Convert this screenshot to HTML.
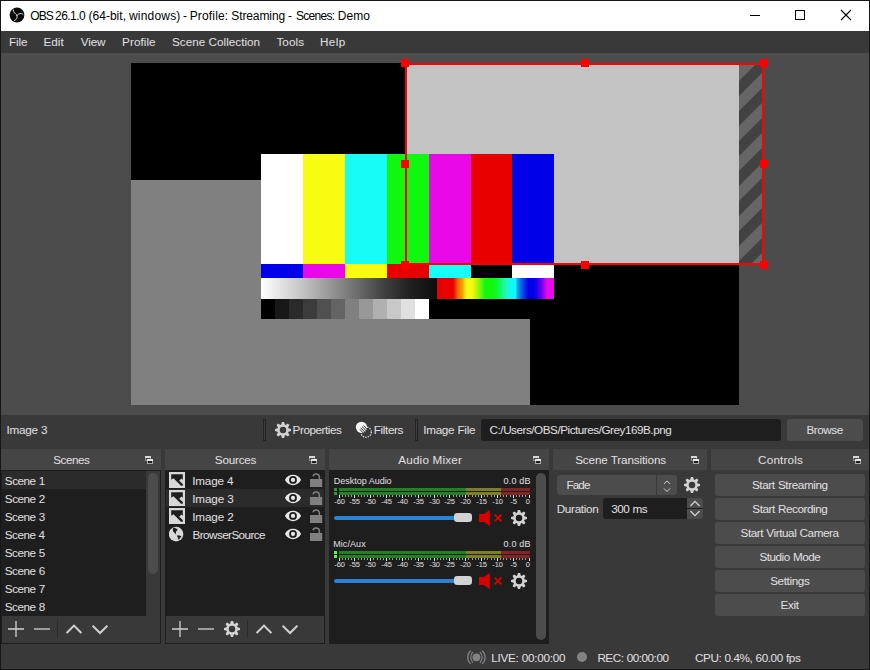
<!DOCTYPE html><html><head><meta charset="utf-8"><title>OBS</title><style>
html,body{margin:0;padding:0}
body{width:870px;height:670px;position:relative;overflow:hidden;background:#3a393a;font-family:"Liberation Sans",sans-serif;font-size:12px;color:#e1e0e1}
.a{position:absolute;display:block}
.t{position:absolute;white-space:nowrap;line-height:14px;font-size:12px}
.tk{position:absolute;white-space:nowrap;line-height:7px;font-size:7.5px;letter-spacing:-0.15px;color:#e1e0e1}
.btn{position:absolute;background:#4c4c4c;border-radius:3px}

</style></head><body>
<div class="a" style="left:0px;top:0px;width:870px;height:670px;background:#161616;"></div>
<div class="a" style="left:1px;top:1px;width:868px;height:30px;background:#ffffff;"></div>
<div class="a" style="left:1px;top:31px;width:868px;height:22px;background:#3a393a;"></div>
<div class="a" style="left:1px;top:53px;width:868px;height:362px;background:#4c4c4c;"></div>
<div class="a" style="left:1px;top:415px;width:868px;height:254px;background:#3a393a;"></div>
<svg class="a" style="left:9px;top:7px" width="16" height="16" viewBox="0 0 16 16"><circle cx="8" cy="8" r="7.4" fill="#0a0a0a"/><path d="M8 8.3 C6.2 6.6 4.4 5.6 4.3 2.9 M8 8.3 C9.6 6.4 12.4 5.6 14 7.4 M8 8.3 C8.6 10.6 7.4 12.8 5.4 13.6" stroke="#e6e6e6" stroke-width="0.9" fill="none" stroke-linecap="round"/></svg>
<svg class="a" style="left:740px;top:1px" width="129" height="30" viewBox="740 1 129 30" shape-rendering="crispEdges"><rect x="750" y="15" width="10" height="1" fill="#000"/><rect x="795.5" y="10.5" width="9" height="9" fill="none" stroke="#000"/><path d="M841 10 L851 20 M851 10 L841 20" stroke="#000" stroke-width="1.1" shape-rendering="geometricPrecision"/></svg>
<svg class="a" style="left:0;top:53px" width="870" height="362" viewBox="0 53 870 362">
<defs><pattern id="hatch" patternUnits="userSpaceOnUse" width="30" height="30" x="739" y="51"><rect width="30" height="30" fill="#666666"/><path d="M0 30 L30 0 L30 15 L15 30Z M0 0 L15 0 L0 15Z" fill="#424242"/></pattern></defs>
<g shape-rendering="crispEdges">
<rect x="131" y="63" width="608" height="342" fill="#000"/>
<rect x="131" y="180" width="399" height="225" fill="#808080"/>
<rect x="405" y="63" width="334" height="202" fill="#c3c3c3"/>
</g>
<rect x="739" y="63" width="25" height="202" fill="url(#hatch)"/>
<g shape-rendering="crispEdges">
<rect x="261" y="154" width="293" height="165" fill="#000"/>
<rect x="261" y="154" width="42" height="110" fill="#ffffff"/>
<rect x="261" y="264" width="42" height="14" fill="#0000e8"/>
<rect x="303" y="154" width="42" height="110" fill="#f8fc10"/>
<rect x="303" y="264" width="42" height="14" fill="#e808e8"/>
<rect x="345" y="154" width="42" height="110" fill="#18fcf8"/>
<rect x="345" y="264" width="42" height="14" fill="#f8fc10"/>
<rect x="387" y="154" width="42" height="110" fill="#10f810"/>
<rect x="387" y="264" width="42" height="14" fill="#e80000"/>
<rect x="429" y="154" width="42" height="110" fill="#e808e8"/>
<rect x="429" y="264" width="42" height="14" fill="#18fcf8"/>
<rect x="471" y="154" width="41" height="110" fill="#e80000"/>
<rect x="471" y="264" width="41" height="14" fill="#000000"/>
<rect x="512" y="154" width="42" height="110" fill="#0000e8"/>
<rect x="512" y="264" width="42" height="14" fill="#ffffff"/>
</g>
<defs><linearGradient id="gg"><stop offset="0" stop-color="#fff"/><stop offset="0.22" stop-color="#c8c8c8"/><stop offset="0.5" stop-color="#7a7a7a"/><stop offset="0.72" stop-color="#3c3c3c"/><stop offset="0.85" stop-color="#202020"/><stop offset="1" stop-color="#0e0e0e"/></linearGradient><linearGradient id="rb"><stop offset="0" stop-color="#e80000"/><stop offset="0.137" stop-color="#e80000"/><stop offset="0.18" stop-color="#f07000"/><stop offset="0.215" stop-color="#f0a000"/><stop offset="0.25" stop-color="#f8f810"/><stop offset="0.3" stop-color="#f8f810"/><stop offset="0.33" stop-color="#c0f810"/><stop offset="0.37" stop-color="#70f810"/><stop offset="0.41" stop-color="#10f810"/><stop offset="0.48" stop-color="#10f810"/><stop offset="0.53" stop-color="#10f850"/><stop offset="0.595" stop-color="#20f8c8"/><stop offset="0.63" stop-color="#10f8f8"/><stop offset="0.67" stop-color="#10f8f8"/><stop offset="0.69" stop-color="#10a0f0"/><stop offset="0.72" stop-color="#1060e8"/><stop offset="0.75" stop-color="#0830e8"/><stop offset="0.78" stop-color="#0000e8"/><stop offset="0.83" stop-color="#0000e8"/><stop offset="0.86" stop-color="#3000e8"/><stop offset="0.9" stop-color="#8000f0"/><stop offset="0.94" stop-color="#e808e8"/><stop offset="1" stop-color="#e808e8"/></linearGradient></defs>
<g shape-rendering="crispEdges">
<rect x="261" y="278" width="175" height="21" fill="url(#gg)"/>
<rect x="437" y="278" width="117" height="21" fill="url(#rb)"/>
<rect x="261" y="299" width="14" height="20" fill="#000000"/>
<rect x="275" y="299" width="14" height="20" fill="#181818"/>
<rect x="289" y="299" width="14" height="20" fill="#2a2a2a"/>
<rect x="303" y="299" width="14" height="20" fill="#3c3c3c"/>
<rect x="317" y="299" width="14" height="20" fill="#505050"/>
<rect x="331" y="299" width="14" height="20" fill="#646464"/>
<rect x="345" y="299" width="14" height="20" fill="#808080"/>
<rect x="359" y="299" width="14" height="20" fill="#989898"/>
<rect x="373" y="299" width="14" height="20" fill="#b0b0b0"/>
<rect x="387" y="299" width="14" height="20" fill="#c8c8c8"/>
<rect x="401" y="299" width="14" height="20" fill="#e0e0e0"/>
<rect x="415" y="299" width="14" height="20" fill="#ffffff"/>
<rect x="406" y="64" width="357" height="200" fill="none" stroke="#ff0000" stroke-width="2"/>
<rect x="401" y="59" width="8" height="8" fill="#ff0000"/>
<rect x="581" y="59" width="8" height="8" fill="#ff0000"/>
<rect x="760" y="59" width="8" height="8" fill="#ff0000"/>
<rect x="401" y="160" width="8" height="8" fill="#ff0000"/>
<rect x="760" y="160" width="8" height="8" fill="#ff0000"/>
<rect x="401" y="261" width="8" height="8" fill="#ff0000"/>
<rect x="581" y="261" width="8" height="8" fill="#ff0000"/>
<rect x="760" y="261" width="8" height="8" fill="#ff0000"/>
</g></svg>
<div class="a" style="left:263px;top:419px;width:3px;height:22px;background:#3d3c3d;box-sizing:border-box;border:1px solid #232323"></div>
<div class="a" style="left:415px;top:419px;width:3px;height:22px;background:#3d3c3d;box-sizing:border-box;border:1px solid #232323"></div>
<svg class="a" style="left:275px;top:422px" width="16" height="16" viewBox="0 0 16 16"><path fill="#d2d2d2" fill-rule="evenodd" d="M13.39 6.15 L16.03 6.95 L16.03 9.05 L13.39 9.85 L13.12 10.51 L14.42 12.94 L12.94 14.42 L10.51 13.12 L9.85 13.39 L9.05 16.03 L6.95 16.03 L6.15 13.39 L5.49 13.12 L3.06 14.42 L1.58 12.94 L2.88 10.51 L2.61 9.85 L-0.03 9.05 L-0.03 6.95 L2.61 6.15 L2.88 5.49 L1.58 3.06 L3.06 1.58 L5.49 2.88 L6.15 2.61 L6.95 -0.03 L9.05 -0.03 L9.85 2.61 L10.51 2.88 L12.94 1.58 L14.42 3.06 L13.12 5.49Z M8 4.75 A3.25 3.25 0 1 0 8 11.25 A3.25 3.25 0 1 0 8 4.75Z"/></svg>
<svg class="a" style="left:354px;top:419px" width="20" height="20" viewBox="354 419 20 20"><defs><clipPath id="fc"><circle cx="366.1" cy="432.1" r="7.0"/></clipPath><clipPath id="fd"><circle cx="361.5" cy="427.3" r="5.65"/></clipPath></defs><circle cx="366.1" cy="432.1" r="5.2" fill="none" stroke="#e8e8e8" stroke-width="1.3" stroke-dasharray="1.25 1.26"/><circle cx="361.5" cy="427.3" r="5.65" fill="#f6f6f6"/><g clip-path="url(#fd)"><g clip-path="url(#fc)"><path d="M362.27 424.24 L369.19 431.46 M360.98 425.47 L367.90 432.69 M359.70 426.71 L366.62 433.93 M358.41 427.94 L365.33 435.16 " stroke="#1c1c1c" stroke-width="0.9"/></g></g></svg>
<div class="a" style="left:481px;top:419px;width:300px;height:22px;background:#1f1e1f;border-radius:3px"></div>
<div class="btn" style="left:787px;top:419px;width:76px;height:22px"></div>
<div class="a" style="left:1px;top:449px;width:160px;height:21px;background:#464546;"></div>
<svg class="a" style="left:145px;top:456px" width="9" height="9" viewBox="0 0 9 9" shape-rendering="crispEdges"><rect x="0" y="0" width="6" height="5" fill="#8c8c8c"/><rect x="1" y="2" width="4" height="2" fill="#464546"/><rect x="0" y="0" width="6" height="2" fill="#d8d8d8"/><rect x="2" y="3" width="6" height="5" fill="#a8a8a8"/><rect x="2" y="3" width="6" height="2" fill="#e6e6e6"/><rect x="3" y="5" width="4" height="2" fill="#1e1e1e"/></svg>
<div class="a" style="left:165px;top:449px;width:160px;height:21px;background:#464546;"></div>
<svg class="a" style="left:309px;top:456px" width="9" height="9" viewBox="0 0 9 9" shape-rendering="crispEdges"><rect x="0" y="0" width="6" height="5" fill="#8c8c8c"/><rect x="1" y="2" width="4" height="2" fill="#464546"/><rect x="0" y="0" width="6" height="2" fill="#d8d8d8"/><rect x="2" y="3" width="6" height="5" fill="#a8a8a8"/><rect x="2" y="3" width="6" height="2" fill="#e6e6e6"/><rect x="3" y="5" width="4" height="2" fill="#1e1e1e"/></svg>
<div class="a" style="left:329px;top:449px;width:220px;height:21px;background:#464546;"></div>
<svg class="a" style="left:533px;top:456px" width="9" height="9" viewBox="0 0 9 9" shape-rendering="crispEdges"><rect x="0" y="0" width="6" height="5" fill="#8c8c8c"/><rect x="1" y="2" width="4" height="2" fill="#464546"/><rect x="0" y="0" width="6" height="2" fill="#d8d8d8"/><rect x="2" y="3" width="6" height="5" fill="#a8a8a8"/><rect x="2" y="3" width="6" height="2" fill="#e6e6e6"/><rect x="3" y="5" width="4" height="2" fill="#1e1e1e"/></svg>
<div class="a" style="left:553px;top:449px;width:154px;height:21px;background:#464546;"></div>
<svg class="a" style="left:691px;top:456px" width="9" height="9" viewBox="0 0 9 9" shape-rendering="crispEdges"><rect x="0" y="0" width="6" height="5" fill="#8c8c8c"/><rect x="1" y="2" width="4" height="2" fill="#464546"/><rect x="0" y="0" width="6" height="2" fill="#d8d8d8"/><rect x="2" y="3" width="6" height="5" fill="#a8a8a8"/><rect x="2" y="3" width="6" height="2" fill="#e6e6e6"/><rect x="3" y="5" width="4" height="2" fill="#1e1e1e"/></svg>
<div class="a" style="left:711px;top:449px;width:158px;height:21px;background:#464546;"></div>
<svg class="a" style="left:853px;top:456px" width="9" height="9" viewBox="0 0 9 9" shape-rendering="crispEdges"><rect x="0" y="0" width="6" height="5" fill="#8c8c8c"/><rect x="1" y="2" width="4" height="2" fill="#464546"/><rect x="0" y="0" width="6" height="2" fill="#d8d8d8"/><rect x="2" y="3" width="6" height="5" fill="#a8a8a8"/><rect x="2" y="3" width="6" height="2" fill="#e6e6e6"/><rect x="3" y="5" width="4" height="2" fill="#1e1e1e"/></svg>
<div class="a" style="left:1px;top:470px;width:160px;height:174px;background:#1f1e1f;"></div>
<div class="a" style="left:2px;top:471px;width:144px;height:145px;background:#1f1e1f;"></div>
<div class="a" style="left:2px;top:471px;width:144px;height:18px;background:#2c2b2c;"></div>
<div class="a" style="left:146px;top:471px;width:14px;height:145px;background:#3a393a;"></div>
<div class="a" style="left:148px;top:473px;width:10px;height:101px;background:#4c4c4c;border-radius:5px"></div>
<div class="a" style="left:2px;top:616px;width:158px;height:27px;background:#3a393a;"></div>
<svg class="a" style="left:8px;top:621px" width="16" height="16" viewBox="0 0 16 16"><path d="M0 8 H16 M8 0 V16" stroke="#d2d2d2" stroke-width="1.3"/></svg>
<svg class="a" style="left:34px;top:621px" width="16" height="16" viewBox="0 0 16 16"><path d="M0 8 H16" stroke="#d2d2d2" stroke-width="1.3"/></svg>
<div class="a" style="left:57px;top:620px;width:1px;height:18px;background:#2b2b2b;"></div>
<svg class="a" style="left:66px;top:621px" width="16" height="16" viewBox="0 0 16 16"><path d="M0.6 12 L8 4.6 L15.4 12" stroke="#d2d2d2" stroke-width="2" fill="none"/></svg>
<svg class="a" style="left:92px;top:621px" width="16" height="16" viewBox="0 0 16 16"><path d="M0.6 4.6 L8 12 L15.4 4.6" stroke="#d2d2d2" stroke-width="2" fill="none"/></svg>
<div class="a" style="left:165px;top:470px;width:160px;height:174px;background:#1f1e1f;"></div>
<div class="a" style="left:166px;top:489px;width:158px;height:18px;background:#2c2b2c;"></div>
<div class="a" style="left:166px;top:616px;width:158px;height:27px;background:#3a393a;"></div>
<svg class="a" style="left:172px;top:621px" width="16" height="16" viewBox="0 0 16 16"><path d="M0 8 H16 M8 0 V16" stroke="#d2d2d2" stroke-width="1.3"/></svg>
<svg class="a" style="left:198px;top:621px" width="16" height="16" viewBox="0 0 16 16"><path d="M0 8 H16" stroke="#d2d2d2" stroke-width="1.3"/></svg>
<svg class="a" style="left:224px;top:621px" width="16" height="16" viewBox="0 0 16 16"><path fill="#d2d2d2" fill-rule="evenodd" d="M13.39 6.15 L16.03 6.95 L16.03 9.05 L13.39 9.85 L13.12 10.51 L14.42 12.94 L12.94 14.42 L10.51 13.12 L9.85 13.39 L9.05 16.03 L6.95 16.03 L6.15 13.39 L5.49 13.12 L3.06 14.42 L1.58 12.94 L2.88 10.51 L2.61 9.85 L-0.03 9.05 L-0.03 6.95 L2.61 6.15 L2.88 5.49 L1.58 3.06 L3.06 1.58 L5.49 2.88 L6.15 2.61 L6.95 -0.03 L9.05 -0.03 L9.85 2.61 L10.51 2.88 L12.94 1.58 L14.42 3.06 L13.12 5.49Z M8 4.75 A3.25 3.25 0 1 0 8 11.25 A3.25 3.25 0 1 0 8 4.75Z"/></svg>
<div class="a" style="left:247px;top:620px;width:1px;height:18px;background:#2b2b2b;"></div>
<svg class="a" style="left:256px;top:621px" width="16" height="16" viewBox="0 0 16 16"><path d="M0.6 12 L8 4.6 L15.4 12" stroke="#d2d2d2" stroke-width="2" fill="none"/></svg>
<svg class="a" style="left:282px;top:621px" width="16" height="16" viewBox="0 0 16 16"><path d="M0.6 4.6 L8 12 L15.4 4.6" stroke="#d2d2d2" stroke-width="2" fill="none"/></svg>
<svg class="a" style="left:169px;top:472px" width="16" height="16" viewBox="0 0 16 16"><rect x="0" y="0" width="16" height="16" fill="#d8d8d8"/><path d="M2.2 2.2 H13.8 V7.9 L12.5 6.6 L10.2 8.7 L13.8 12 V13.8 H12 L4.5 6.2 L2.2 7.8Z" fill="#1f1e1f"/></svg>
<svg class="a" style="left:169px;top:490px" width="16" height="16" viewBox="0 0 16 16"><rect x="0" y="0" width="16" height="16" fill="#d8d8d8"/><path d="M2.2 2.2 H13.8 V7.9 L12.5 6.6 L10.2 8.7 L13.8 12 V13.8 H12 L4.5 6.2 L2.2 7.8Z" fill="#1f1e1f"/></svg>
<svg class="a" style="left:169px;top:508px" width="16" height="16" viewBox="0 0 16 16"><rect x="0" y="0" width="16" height="16" fill="#d8d8d8"/><path d="M2.2 2.2 H13.8 V7.9 L12.5 6.6 L10.2 8.7 L13.8 12 V13.8 H12 L4.5 6.2 L2.2 7.8Z" fill="#1f1e1f"/></svg>
<svg class="a" style="left:169px;top:526px" width="16" height="16" viewBox="0 0 16 16"><circle cx="7.1" cy="8.1" r="7.3" fill="#d8d8d8"/><path d="M4 2 L5.2 1.5 L6.5 2.3 L8.6 3.2 L8 4.8 L7 5.6 L7 7 L6.4 8.4 L5.4 6.6 L4.2 5.8 L3.8 4Z M8.2 9.2 L10.2 9.4 L12.6 10.2 L11.4 11.6 L10.2 13.4 L9.4 13.4 L8.8 11.4 L8.2 10.4Z" fill="#1f1e1f"/></svg>
<svg class="a" style="left:285px;top:472px" width="16" height="16" viewBox="0 0 16 16"><path d="M-0.1 7.9 C3 0.9 13 0.9 16.1 7.9 C13 14.9 3 14.9 -0.1 7.9Z" fill="#e8e8e8"/><circle cx="8" cy="7.9" r="3.9" fill="#1f1e1f"/><circle cx="8" cy="7.9" r="2.1" fill="#e8e8e8"/></svg>
<svg class="a" style="left:310px;top:473px" width="13" height="15" viewBox="0 0 13 15"><path d="M2.93 3.3 A3.3 3.3 0 0 1 9.4 4.2 V6.2" fill="none" stroke="#808080" stroke-width="1.5"/><rect x="0" y="6" width="12.2" height="8" fill="#808080"/></svg>
<svg class="a" style="left:285px;top:490px" width="16" height="16" viewBox="0 0 16 16"><path d="M-0.1 7.9 C3 0.9 13 0.9 16.1 7.9 C13 14.9 3 14.9 -0.1 7.9Z" fill="#e8e8e8"/><circle cx="8" cy="7.9" r="3.9" fill="#1f1e1f"/><circle cx="8" cy="7.9" r="2.1" fill="#e8e8e8"/></svg>
<svg class="a" style="left:310px;top:491px" width="13" height="15" viewBox="0 0 13 15"><path d="M2.93 3.3 A3.3 3.3 0 0 1 9.4 4.2 V6.2" fill="none" stroke="#808080" stroke-width="1.5"/><rect x="0" y="6" width="12.2" height="8" fill="#808080"/></svg>
<svg class="a" style="left:285px;top:508px" width="16" height="16" viewBox="0 0 16 16"><path d="M-0.1 7.9 C3 0.9 13 0.9 16.1 7.9 C13 14.9 3 14.9 -0.1 7.9Z" fill="#e8e8e8"/><circle cx="8" cy="7.9" r="3.9" fill="#1f1e1f"/><circle cx="8" cy="7.9" r="2.1" fill="#e8e8e8"/></svg>
<svg class="a" style="left:310px;top:509px" width="13" height="15" viewBox="0 0 13 15"><path d="M2.93 3.3 A3.3 3.3 0 0 1 9.4 4.2 V6.2" fill="none" stroke="#808080" stroke-width="1.5"/><rect x="0" y="6" width="12.2" height="8" fill="#808080"/></svg>
<svg class="a" style="left:285px;top:526px" width="16" height="16" viewBox="0 0 16 16"><path d="M-0.1 7.9 C3 0.9 13 0.9 16.1 7.9 C13 14.9 3 14.9 -0.1 7.9Z" fill="#e8e8e8"/><circle cx="8" cy="7.9" r="3.9" fill="#1f1e1f"/><circle cx="8" cy="7.9" r="2.1" fill="#e8e8e8"/></svg>
<svg class="a" style="left:310px;top:527px" width="13" height="15" viewBox="0 0 13 15"><path d="M2.93 3.3 A3.3 3.3 0 0 1 9.4 4.2 V6.2" fill="none" stroke="#808080" stroke-width="1.5"/><rect x="0" y="6" width="12.2" height="8" fill="#808080"/></svg>
<div class="a" style="left:329px;top:470px;width:220px;height:174px;background:#1f1e1f;"></div>
<div class="a" style="left:536px;top:473px;width:10px;height:167px;background:#4c4c4c;border-radius:5px"></div>
<div class="a" style="left:334px;top:488px;width:3px;height:3px;background:#2d9a2d;"></div>
<div class="a" style="left:339px;top:488px;width:127px;height:3px;background:#267f26;"></div>
<div class="a" style="left:466px;top:488px;width:35px;height:3px;background:#7f7f26;"></div>
<div class="a" style="left:501px;top:488px;width:29px;height:3px;background:#7f2626;"></div>
<div class="a" style="left:334px;top:492px;width:3px;height:3px;background:#2d9a2d;"></div>
<div class="a" style="left:339px;top:492px;width:127px;height:3px;background:#267f26;"></div>
<div class="a" style="left:466px;top:492px;width:35px;height:3px;background:#7f7f26;"></div>
<div class="a" style="left:501px;top:492px;width:29px;height:3px;background:#7f2626;"></div>
<svg class="a" style="left:334px;top:495px" width="200" height="4" shape-rendering="crispEdges"><rect x="5" y="0" width="1" height="3" fill="#e1e0e1"/><rect x="8" y="0" width="1" height="2" fill="#9a9a9a"/><rect x="11" y="0" width="1" height="2" fill="#9a9a9a"/><rect x="14" y="0" width="1" height="2" fill="#9a9a9a"/><rect x="17" y="0" width="1" height="2" fill="#9a9a9a"/><rect x="20" y="0" width="1" height="3" fill="#e1e0e1"/><rect x="24" y="0" width="1" height="2" fill="#9a9a9a"/><rect x="27" y="0" width="1" height="2" fill="#9a9a9a"/><rect x="30" y="0" width="1" height="2" fill="#9a9a9a"/><rect x="33" y="0" width="1" height="2" fill="#9a9a9a"/><rect x="36" y="0" width="1" height="3" fill="#e1e0e1"/><rect x="39" y="0" width="1" height="2" fill="#9a9a9a"/><rect x="43" y="0" width="1" height="2" fill="#9a9a9a"/><rect x="46" y="0" width="1" height="2" fill="#9a9a9a"/><rect x="49" y="0" width="1" height="2" fill="#9a9a9a"/><rect x="52" y="0" width="1" height="3" fill="#e1e0e1"/><rect x="55" y="0" width="1" height="2" fill="#9a9a9a"/><rect x="58" y="0" width="1" height="2" fill="#9a9a9a"/><rect x="62" y="0" width="1" height="2" fill="#9a9a9a"/><rect x="65" y="0" width="1" height="2" fill="#9a9a9a"/><rect x="68" y="0" width="1" height="3" fill="#e1e0e1"/><rect x="71" y="0" width="1" height="2" fill="#9a9a9a"/><rect x="74" y="0" width="1" height="2" fill="#9a9a9a"/><rect x="77" y="0" width="1" height="2" fill="#9a9a9a"/><rect x="81" y="0" width="1" height="2" fill="#9a9a9a"/><rect x="84" y="0" width="1" height="3" fill="#e1e0e1"/><rect x="87" y="0" width="1" height="2" fill="#9a9a9a"/><rect x="90" y="0" width="1" height="2" fill="#9a9a9a"/><rect x="93" y="0" width="1" height="2" fill="#9a9a9a"/><rect x="96" y="0" width="1" height="2" fill="#9a9a9a"/><rect x="100" y="0" width="1" height="3" fill="#e1e0e1"/><rect x="103" y="0" width="1" height="2" fill="#9a9a9a"/><rect x="106" y="0" width="1" height="2" fill="#9a9a9a"/><rect x="109" y="0" width="1" height="2" fill="#9a9a9a"/><rect x="112" y="0" width="1" height="2" fill="#9a9a9a"/><rect x="115" y="0" width="1" height="3" fill="#e1e0e1"/><rect x="119" y="0" width="1" height="2" fill="#9a9a9a"/><rect x="122" y="0" width="1" height="2" fill="#9a9a9a"/><rect x="125" y="0" width="1" height="2" fill="#9a9a9a"/><rect x="128" y="0" width="1" height="2" fill="#9a9a9a"/><rect x="131" y="0" width="1" height="3" fill="#e1e0e1"/><rect x="134" y="0" width="1" height="2" fill="#9a9a9a"/><rect x="138" y="0" width="1" height="2" fill="#9a9a9a"/><rect x="141" y="0" width="1" height="2" fill="#9a9a9a"/><rect x="144" y="0" width="1" height="2" fill="#9a9a9a"/><rect x="147" y="0" width="1" height="3" fill="#e1e0e1"/><rect x="150" y="0" width="1" height="2" fill="#9a9a9a"/><rect x="153" y="0" width="1" height="2" fill="#9a9a9a"/><rect x="157" y="0" width="1" height="2" fill="#9a9a9a"/><rect x="160" y="0" width="1" height="2" fill="#9a9a9a"/><rect x="163" y="0" width="1" height="3" fill="#e1e0e1"/><rect x="166" y="0" width="1" height="2" fill="#9a9a9a"/><rect x="169" y="0" width="1" height="2" fill="#9a9a9a"/><rect x="172" y="0" width="1" height="2" fill="#9a9a9a"/><rect x="176" y="0" width="1" height="2" fill="#9a9a9a"/><rect x="179" y="0" width="1" height="3" fill="#e1e0e1"/><rect x="182" y="0" width="1" height="2" fill="#9a9a9a"/><rect x="185" y="0" width="1" height="2" fill="#9a9a9a"/><rect x="188" y="0" width="1" height="2" fill="#9a9a9a"/><rect x="191" y="0" width="1" height="2" fill="#9a9a9a"/><rect x="195" y="0" width="1" height="3" fill="#e1e0e1"/></svg>
<span class="tk" style="left:329.5px;top:498px;width:20px;text-align:center">-60</span>
<span class="tk" style="left:344.5px;top:498px;width:20px;text-align:center">-55</span>
<span class="tk" style="left:360.5px;top:498px;width:20px;text-align:center">-50</span>
<span class="tk" style="left:376.5px;top:498px;width:20px;text-align:center">-45</span>
<span class="tk" style="left:392.5px;top:498px;width:20px;text-align:center">-40</span>
<span class="tk" style="left:408.5px;top:498px;width:20px;text-align:center">-35</span>
<span class="tk" style="left:424.5px;top:498px;width:20px;text-align:center">-30</span>
<span class="tk" style="left:439.5px;top:498px;width:20px;text-align:center">-25</span>
<span class="tk" style="left:455.5px;top:498px;width:20px;text-align:center">-20</span>
<span class="tk" style="left:471.5px;top:498px;width:20px;text-align:center">-15</span>
<span class="tk" style="left:487.5px;top:498px;width:20px;text-align:center">-10</span>
<span class="tk" style="left:503.5px;top:498px;width:20px;text-align:center">-5</span>
<span class="tk" style="left:520.8px;top:498px;width:9px;text-align:right">0</span>
<div class="a" style="left:334px;top:516px;width:122px;height:4px;background:#2a82da;border-radius:2px"></div>
<div class="a" style="left:454px;top:513.3px;width:18.4px;height:8.9px;background:#d2d2d2;border-radius:3.2px"></div>
<svg class="a" style="left:479px;top:510px" width="24" height="16" viewBox="0 0 24 16"><path d="M0 4.1 H4.8 L10.8 0 V16 L4.8 11.9 H0Z" fill="#d80000"/><path d="M15.6 4.6 L22.4 11.4 M22.4 4.6 L15.6 11.4" stroke="#d80000" stroke-width="1.9" fill="none"/></svg>
<svg class="a" style="left:511px;top:510px" width="16" height="16" viewBox="0 0 16 16"><path fill="#d2d2d2" fill-rule="evenodd" d="M13.39 6.15 L16.03 6.95 L16.03 9.05 L13.39 9.85 L13.12 10.51 L14.42 12.94 L12.94 14.42 L10.51 13.12 L9.85 13.39 L9.05 16.03 L6.95 16.03 L6.15 13.39 L5.49 13.12 L3.06 14.42 L1.58 12.94 L2.88 10.51 L2.61 9.85 L-0.03 9.05 L-0.03 6.95 L2.61 6.15 L2.88 5.49 L1.58 3.06 L3.06 1.58 L5.49 2.88 L6.15 2.61 L6.95 -0.03 L9.05 -0.03 L9.85 2.61 L10.51 2.88 L12.94 1.58 L14.42 3.06 L13.12 5.49Z M8 4.75 A3.25 3.25 0 1 0 8 11.25 A3.25 3.25 0 1 0 8 4.75Z"/></svg>
<div class="a" style="left:334px;top:551px;width:3px;height:3px;background:#4cff4c;"></div>
<div class="a" style="left:339px;top:551px;width:127px;height:3px;background:#267f26;"></div>
<div class="a" style="left:466px;top:551px;width:35px;height:3px;background:#7f7f26;"></div>
<div class="a" style="left:501px;top:551px;width:29px;height:3px;background:#7f2626;"></div>
<div class="a" style="left:334px;top:555px;width:3px;height:3px;background:#4cff4c;"></div>
<div class="a" style="left:339px;top:555px;width:127px;height:3px;background:#267f26;"></div>
<div class="a" style="left:466px;top:555px;width:35px;height:3px;background:#7f7f26;"></div>
<div class="a" style="left:501px;top:555px;width:29px;height:3px;background:#7f2626;"></div>
<svg class="a" style="left:334px;top:558px" width="200" height="4" shape-rendering="crispEdges"><rect x="5" y="0" width="1" height="3" fill="#e1e0e1"/><rect x="8" y="0" width="1" height="2" fill="#9a9a9a"/><rect x="11" y="0" width="1" height="2" fill="#9a9a9a"/><rect x="14" y="0" width="1" height="2" fill="#9a9a9a"/><rect x="17" y="0" width="1" height="2" fill="#9a9a9a"/><rect x="20" y="0" width="1" height="3" fill="#e1e0e1"/><rect x="24" y="0" width="1" height="2" fill="#9a9a9a"/><rect x="27" y="0" width="1" height="2" fill="#9a9a9a"/><rect x="30" y="0" width="1" height="2" fill="#9a9a9a"/><rect x="33" y="0" width="1" height="2" fill="#9a9a9a"/><rect x="36" y="0" width="1" height="3" fill="#e1e0e1"/><rect x="39" y="0" width="1" height="2" fill="#9a9a9a"/><rect x="43" y="0" width="1" height="2" fill="#9a9a9a"/><rect x="46" y="0" width="1" height="2" fill="#9a9a9a"/><rect x="49" y="0" width="1" height="2" fill="#9a9a9a"/><rect x="52" y="0" width="1" height="3" fill="#e1e0e1"/><rect x="55" y="0" width="1" height="2" fill="#9a9a9a"/><rect x="58" y="0" width="1" height="2" fill="#9a9a9a"/><rect x="62" y="0" width="1" height="2" fill="#9a9a9a"/><rect x="65" y="0" width="1" height="2" fill="#9a9a9a"/><rect x="68" y="0" width="1" height="3" fill="#e1e0e1"/><rect x="71" y="0" width="1" height="2" fill="#9a9a9a"/><rect x="74" y="0" width="1" height="2" fill="#9a9a9a"/><rect x="77" y="0" width="1" height="2" fill="#9a9a9a"/><rect x="81" y="0" width="1" height="2" fill="#9a9a9a"/><rect x="84" y="0" width="1" height="3" fill="#e1e0e1"/><rect x="87" y="0" width="1" height="2" fill="#9a9a9a"/><rect x="90" y="0" width="1" height="2" fill="#9a9a9a"/><rect x="93" y="0" width="1" height="2" fill="#9a9a9a"/><rect x="96" y="0" width="1" height="2" fill="#9a9a9a"/><rect x="100" y="0" width="1" height="3" fill="#e1e0e1"/><rect x="103" y="0" width="1" height="2" fill="#9a9a9a"/><rect x="106" y="0" width="1" height="2" fill="#9a9a9a"/><rect x="109" y="0" width="1" height="2" fill="#9a9a9a"/><rect x="112" y="0" width="1" height="2" fill="#9a9a9a"/><rect x="115" y="0" width="1" height="3" fill="#e1e0e1"/><rect x="119" y="0" width="1" height="2" fill="#9a9a9a"/><rect x="122" y="0" width="1" height="2" fill="#9a9a9a"/><rect x="125" y="0" width="1" height="2" fill="#9a9a9a"/><rect x="128" y="0" width="1" height="2" fill="#9a9a9a"/><rect x="131" y="0" width="1" height="3" fill="#e1e0e1"/><rect x="134" y="0" width="1" height="2" fill="#9a9a9a"/><rect x="138" y="0" width="1" height="2" fill="#9a9a9a"/><rect x="141" y="0" width="1" height="2" fill="#9a9a9a"/><rect x="144" y="0" width="1" height="2" fill="#9a9a9a"/><rect x="147" y="0" width="1" height="3" fill="#e1e0e1"/><rect x="150" y="0" width="1" height="2" fill="#9a9a9a"/><rect x="153" y="0" width="1" height="2" fill="#9a9a9a"/><rect x="157" y="0" width="1" height="2" fill="#9a9a9a"/><rect x="160" y="0" width="1" height="2" fill="#9a9a9a"/><rect x="163" y="0" width="1" height="3" fill="#e1e0e1"/><rect x="166" y="0" width="1" height="2" fill="#9a9a9a"/><rect x="169" y="0" width="1" height="2" fill="#9a9a9a"/><rect x="172" y="0" width="1" height="2" fill="#9a9a9a"/><rect x="176" y="0" width="1" height="2" fill="#9a9a9a"/><rect x="179" y="0" width="1" height="3" fill="#e1e0e1"/><rect x="182" y="0" width="1" height="2" fill="#9a9a9a"/><rect x="185" y="0" width="1" height="2" fill="#9a9a9a"/><rect x="188" y="0" width="1" height="2" fill="#9a9a9a"/><rect x="191" y="0" width="1" height="2" fill="#9a9a9a"/><rect x="195" y="0" width="1" height="3" fill="#e1e0e1"/></svg>
<span class="tk" style="left:329.5px;top:561px;width:20px;text-align:center">-60</span>
<span class="tk" style="left:344.5px;top:561px;width:20px;text-align:center">-55</span>
<span class="tk" style="left:360.5px;top:561px;width:20px;text-align:center">-50</span>
<span class="tk" style="left:376.5px;top:561px;width:20px;text-align:center">-45</span>
<span class="tk" style="left:392.5px;top:561px;width:20px;text-align:center">-40</span>
<span class="tk" style="left:408.5px;top:561px;width:20px;text-align:center">-35</span>
<span class="tk" style="left:424.5px;top:561px;width:20px;text-align:center">-30</span>
<span class="tk" style="left:439.5px;top:561px;width:20px;text-align:center">-25</span>
<span class="tk" style="left:455.5px;top:561px;width:20px;text-align:center">-20</span>
<span class="tk" style="left:471.5px;top:561px;width:20px;text-align:center">-15</span>
<span class="tk" style="left:487.5px;top:561px;width:20px;text-align:center">-10</span>
<span class="tk" style="left:503.5px;top:561px;width:20px;text-align:center">-5</span>
<span class="tk" style="left:520.8px;top:561px;width:9px;text-align:right">0</span>
<div class="a" style="left:334px;top:579px;width:122px;height:4px;background:#2a82da;border-radius:2px"></div>
<div class="a" style="left:454px;top:576.3px;width:18.4px;height:8.9px;background:#d2d2d2;border-radius:3.2px"></div>
<svg class="a" style="left:479px;top:573px" width="24" height="16" viewBox="0 0 24 16"><path d="M0 4.1 H4.8 L10.8 0 V16 L4.8 11.9 H0Z" fill="#d80000"/><path d="M15.6 4.6 L22.4 11.4 M22.4 4.6 L15.6 11.4" stroke="#d80000" stroke-width="1.9" fill="none"/></svg>
<svg class="a" style="left:511px;top:573px" width="16" height="16" viewBox="0 0 16 16"><path fill="#d2d2d2" fill-rule="evenodd" d="M13.39 6.15 L16.03 6.95 L16.03 9.05 L13.39 9.85 L13.12 10.51 L14.42 12.94 L12.94 14.42 L10.51 13.12 L9.85 13.39 L9.05 16.03 L6.95 16.03 L6.15 13.39 L5.49 13.12 L3.06 14.42 L1.58 12.94 L2.88 10.51 L2.61 9.85 L-0.03 9.05 L-0.03 6.95 L2.61 6.15 L2.88 5.49 L1.58 3.06 L3.06 1.58 L5.49 2.88 L6.15 2.61 L6.95 -0.03 L9.05 -0.03 L9.85 2.61 L10.51 2.88 L12.94 1.58 L14.42 3.06 L13.12 5.49Z M8 4.75 A3.25 3.25 0 1 0 8 11.25 A3.25 3.25 0 1 0 8 4.75Z"/></svg>
<div class="btn" style="left:557px;top:475px;width:120px;height:20px"></div>
<div class="a" style="left:656px;top:475px;width:1px;height:20px;background:#3a393a;"></div>
<svg class="a" style="left:661px;top:478px" width="12" height="14" viewBox="0 0 12 14"><path d="M2.9 6 L6 2.9 L9.1 6 M2.9 10.4 L6 13.5 L9.1 10.4" stroke="#d2d2d2" stroke-width="1" fill="none"/></svg>
<svg class="a" style="left:684px;top:477px" width="16" height="16" viewBox="0 0 16 16"><path fill="#d2d2d2" fill-rule="evenodd" d="M13.39 6.15 L16.03 6.95 L16.03 9.05 L13.39 9.85 L13.12 10.51 L14.42 12.94 L12.94 14.42 L10.51 13.12 L9.85 13.39 L9.05 16.03 L6.95 16.03 L6.15 13.39 L5.49 13.12 L3.06 14.42 L1.58 12.94 L2.88 10.51 L2.61 9.85 L-0.03 9.05 L-0.03 6.95 L2.61 6.15 L2.88 5.49 L1.58 3.06 L3.06 1.58 L5.49 2.88 L6.15 2.61 L6.95 -0.03 L9.05 -0.03 L9.85 2.61 L10.51 2.88 L12.94 1.58 L14.42 3.06 L13.12 5.49Z M8 4.75 A3.25 3.25 0 1 0 8 11.25 A3.25 3.25 0 1 0 8 4.75Z"/></svg>
<div class="a" style="left:603px;top:498px;width:100px;height:21px;background:#1f1e1f;border-radius:3px"></div>
<div class="a" style="left:687px;top:498px;width:16px;height:10px;background:#4c4c4c;border-radius:0 3px 0 0"></div>
<div class="a" style="left:687px;top:509px;width:16px;height:10px;background:#4c4c4c;border-radius:0 0 3px 0"></div>
<svg class="a" style="left:687px;top:498px" width="16" height="21" viewBox="0 0 16 21"><path d="M3.4 8 L8 3.4 L12.6 8 M3.4 13 L8 17.6 L12.6 13" stroke="#d2d2d2" stroke-width="1.3" fill="none"/></svg>
<div class="btn" style="left:715px;top:474px;width:150px;height:22px"></div>
<div class="btn" style="left:715px;top:498px;width:150px;height:22px"></div>
<div class="btn" style="left:715px;top:522px;width:150px;height:22px"></div>
<div class="btn" style="left:715px;top:546px;width:150px;height:22px"></div>
<div class="btn" style="left:715px;top:570px;width:150px;height:22px"></div>
<div class="btn" style="left:715px;top:594px;width:150px;height:22px"></div>
<svg class="a" style="left:464px;top:647px" width="26" height="20" viewBox="464 647 26 20"><circle cx="476.4" cy="657.3" r="3.9" fill="#838383"/><path d="M472.9 651.9 A8 8 0 0 0 472.9 662.7 M479.9 651.9 A8 8 0 0 1 479.9 662.7 M470.7 650.7 A8.8 8.8 0 0 0 470.7 663.9 M482.1 650.7 A8.8 8.8 0 0 1 482.1 663.9" stroke="#7e7e7e" stroke-width="1.35" fill="none"/></svg>
<div class="a" style="left:577px;top:652px;width:10px;height:10px;background:#838383;border-radius:5px"></div>
<span class="t" style="left:30.3px;top:9px;color:#000000;letter-spacing:-1.0px;word-spacing:1.0px">OBS</span>
<span class="t" style="left:55.1px;top:9px;color:#000000;letter-spacing:-0.572px;word-spacing:0.572px">26.1.0</span>
<span class="t" style="left:88.5px;top:9px;color:#000000;letter-spacing:0.019px;word-spacing:0px">(64-bit,</span>
<span class="t" style="left:129.0px;top:9px;color:#000000;letter-spacing:0.189px;word-spacing:0px">windows)</span>
<span class="t" style="left:183.0px;top:9px;color:#000000;letter-spacing:0px;word-spacing:0px">-</span>
<span class="t" style="left:189.7px;top:9px;color:#000000;letter-spacing:0.159px;word-spacing:0px">Profile:</span>
<span class="t" style="left:231.3px;top:9px;color:#000000;letter-spacing:-0.108px;word-spacing:0.108px">Streaming</span>
<span class="t" style="left:288.0px;top:9px;color:#000000;letter-spacing:0px;word-spacing:0px">-</span>
<span class="t" style="left:295.9px;top:9px;color:#000000;letter-spacing:-0.686px;word-spacing:0.686px">Scenes:</span>
<span class="t" style="left:337.8px;top:9px;color:#000000;letter-spacing:0.047px;word-spacing:0px">Demo</span>
<span class="t" style="left:8.9px;top:35px;font-size:11.7px;letter-spacing:-0.083px;word-spacing:0.083px">File</span>
<span class="t" style="left:43.5px;top:35px;font-size:11.7px;letter-spacing:0.0px;word-spacing:0px">Edit</span>
<span class="t" style="left:80.7px;top:35px;font-size:11.7px;letter-spacing:-0.094px;word-spacing:0.094px">View</span>
<span class="t" style="left:122.1px;top:35px;font-size:11.7px;letter-spacing:0.064px;word-spacing:0px">Profile</span>
<span class="t" style="left:172.0px;top:35px;font-size:11.7px;letter-spacing:0.026px;word-spacing:0px">Scene Collection</span>
<span class="t" style="left:276.4px;top:35px;font-size:11.7px;letter-spacing:0.077px;word-spacing:0px">Tools</span>
<span class="t" style="left:320.0px;top:35px;font-size:11.7px;letter-spacing:0.406px;word-spacing:0px">Help</span>
<span class="t" style="left:6.4px;top:423px;font-size:11.7px;letter-spacing:-0.206px;word-spacing:0.206px">Image 3</span>
<span class="t" style="left:292.6px;top:423px;font-size:11.7px;letter-spacing:-0.444px;word-spacing:0.444px">Properties</span>
<span class="t" style="left:373.7px;top:423px;font-size:11.7px;letter-spacing:-0.346px;word-spacing:0.346px">Filters</span>
<span class="t" style="left:423.3px;top:423px;font-size:11.7px;letter-spacing:-0.303px;word-spacing:0.303px">Image File</span>
<span class="t" style="left:489.6px;top:423px;font-size:11.7px;letter-spacing:-0.465px;word-spacing:0.465px">C:/Users/OBS/Pictures/Grey169B.png</span>
<span class="t" style="left:806.4px;top:423px;font-size:11.7px;letter-spacing:-0.428px;word-spacing:0.428px">Browse</span>
<span class="t" style="left:53.2px;top:453px;font-size:11.7px;letter-spacing:-0.456px;word-spacing:0.456px">Scenes</span>
<span class="t" style="left:214.8px;top:453px;font-size:11.7px;letter-spacing:-0.213px;word-spacing:0.213px">Sources</span>
<span class="t" style="left:398.2px;top:453px;font-size:11.7px;letter-spacing:0.2px;word-spacing:0px">Audio Mixer</span>
<span class="t" style="left:575.2px;top:453px;font-size:11.7px;letter-spacing:-0.133px;word-spacing:0.133px">Scene Transitions</span>
<span class="t" style="left:758.1px;top:453px;font-size:11.7px;letter-spacing:0.179px;word-spacing:0px">Controls</span>
<span class="t" style="left:4.8px;top:474px;font-size:11.7px;letter-spacing:-0.462px;word-spacing:0.462px">Scene 1</span>
<span class="t" style="left:4.8px;top:492px;font-size:11.7px;letter-spacing:-0.462px;word-spacing:0.462px">Scene 2</span>
<span class="t" style="left:4.8px;top:510px;font-size:11.7px;letter-spacing:-0.472px;word-spacing:0.472px">Scene 3</span>
<span class="t" style="left:4.8px;top:528px;font-size:11.7px;letter-spacing:-0.512px;word-spacing:0.512px">Scene 4</span>
<span class="t" style="left:4.8px;top:546px;font-size:11.7px;letter-spacing:-0.472px;word-spacing:0.472px">Scene 5</span>
<span class="t" style="left:4.8px;top:564px;font-size:11.7px;letter-spacing:-0.472px;word-spacing:0.472px">Scene 6</span>
<span class="t" style="left:4.8px;top:582px;font-size:11.7px;letter-spacing:-0.462px;word-spacing:0.462px">Scene 7</span>
<span class="t" style="left:4.8px;top:600px;font-size:11.7px;letter-spacing:-0.472px;word-spacing:0.472px">Scene 8</span>
<span class="t" style="left:192.2px;top:474px;font-size:11.7px;letter-spacing:-0.172px;word-spacing:0.172px">Image 4</span>
<span class="t" style="left:192.2px;top:492px;font-size:11.7px;letter-spacing:-0.122px;word-spacing:0.122px">Image 3</span>
<span class="t" style="left:192.2px;top:510px;font-size:11.7px;letter-spacing:-0.122px;word-spacing:0.122px">Image 2</span>
<span class="t" style="left:192.6px;top:528px;font-size:11.7px;letter-spacing:-0.583px;word-spacing:0.583px">BrowserSource</span>
<span class="t" style="left:333.8px;top:474px;font-size:9px;letter-spacing:-0.02px;word-spacing:0.02px">Desktop Audio</span>
<span class="t" style="left:503.6px;top:474px;font-size:9px;letter-spacing:0.173px;word-spacing:0px">0.0 dB</span>
<span class="t" style="left:333.2px;top:537px;font-size:9px;letter-spacing:0.083px;word-spacing:0px">Mic/Aux</span>
<span class="t" style="left:503.6px;top:537px;font-size:9px;letter-spacing:0.173px;word-spacing:0px">0.0 dB</span>
<span class="t" style="left:566.5px;top:478px;font-size:11.7px;letter-spacing:-0.917px;word-spacing:0.917px">Fade</span>
<span class="t" style="left:556.7px;top:502px;font-size:11.7px;letter-spacing:-0.296px;word-spacing:0.296px">Duration</span>
<span class="t" style="left:611.3px;top:502px;font-size:11.7px;letter-spacing:-0.535px;word-spacing:0.535px">300 ms</span>
<span class="t" style="left:751.9px;top:478px;font-size:11.7px;letter-spacing:-0.385px;word-spacing:0.385px">Start Streaming</span>
<span class="t" style="left:752.3px;top:502px;font-size:11.7px;letter-spacing:-0.44px;word-spacing:0.44px">Start Recording</span>
<span class="t" style="left:740.5px;top:526px;font-size:11.7px;letter-spacing:-0.418px;word-spacing:0.418px">Start Virtual Camera</span>
<span class="t" style="left:759.5px;top:550px;font-size:11.7px;letter-spacing:-0.496px;word-spacing:0.496px">Studio Mode</span>
<span class="t" style="left:770.2px;top:574px;font-size:11.7px;letter-spacing:-0.382px;word-spacing:0.382px">Settings</span>
<span class="t" style="left:780.5px;top:598px;font-size:11.7px;letter-spacing:-0.333px;word-spacing:0.333px">Exit</span>
<span class="t" style="left:491.2px;top:651px;font-size:11.7px;letter-spacing:-0.258px;word-spacing:0.258px">LIVE: 00:00:00</span>
<span class="t" style="left:597.4px;top:651px;font-size:11.7px;letter-spacing:-0.465px;word-spacing:0.465px">REC: 00:00:00</span>
<span class="t" style="left:695.0px;top:651px;font-size:11.7px;letter-spacing:-0.413px;word-spacing:0.413px">CPU: 0.4%, 60.00 fps</span>
</body></html>
